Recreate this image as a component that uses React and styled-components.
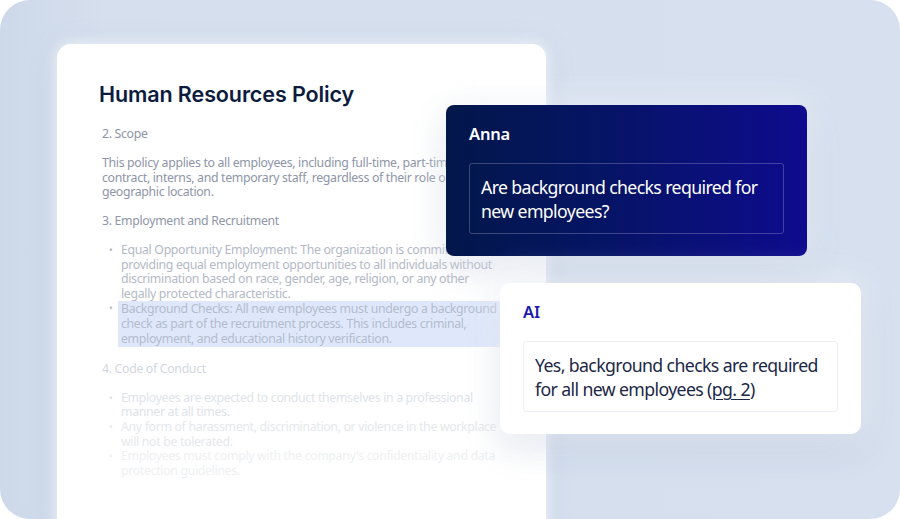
import React from "react";
import styled, { createGlobalStyle } from "styled-components";

const Global = createGlobalStyle`
  html, body { margin: 0; padding: 0; background: #ffffff; }
  body { width: 900px; height: 519px; overflow: hidden; }
  * { box-sizing: border-box; }
`;

const Frame = styled.div`
  position: relative;
  width: 900px;
  height: 519px;
  border-radius: 30px;
  overflow: hidden;
  background: linear-gradient(90deg, #cdd8e9 0%, #d5dfee 12%, #d6e0ef 100%);
  padding: 44px 0 0 57px;
`;

const Doc = styled.div`
  width: 489px;
  height: 520px;
  background: #ffffff;
  border-radius: 14px;
  box-shadow: 0 0 14px 2px rgba(240, 244, 250, 0.9), 0 4px 30px rgba(140, 160, 195, 0.18);
  padding: 36px 46px 0 42px;
  font-family: "Noto Sans", "Open Sans", sans-serif;
  font-size: 12.3px;
  line-height: 14.6px;
  letter-spacing: -0.32px;
`;

const Title = styled.h1`
  margin: 0 0 19px;
  font-family: Inter, "Noto Sans", sans-serif;
  font-weight: 600;
  font-size: 21.5px;
  line-height: 28px;
  color: #0d1b3e;
  letter-spacing: -0.1px;
`;

const Heading = styled.div`
  margin: 0 3px 14.5px 3px;
  color: ${(p) => p.$color};
`;

const Para = styled.p`
  margin: 0 3px 14px 3px;
  color: ${(p) => p.$color};
`;

const List = styled.ul`
  margin: 0 0 14.5px 0;
  padding: 0;
  list-style: none;
`;

const Item = styled.li`
  position: relative;
  padding: 0 0 0 22px;
  color: ${(p) => p.$color};
  &::before {
    content: "•";
    position: absolute;
    left: 10px;
    top: 0;
    font-size: 10px;
    color: inherit;
  }
`;

const HighlightText = styled.span`
  display: block;
  margin-left: -3px;
  margin-right: -10px;
  padding: 1px 10px 1px 3px;
  background: #dfe8fb;
  color: #b3bccd;
`;

const Card = styled.div`
  position: absolute;
  left: ${(p) => p.$left}px;
  top: ${(p) => p.$top}px;
  width: 361px;
  padding: 17px 23px 22px;
  border-radius: ${(p) => p.$radius}px;
  background: ${(p) => p.$bg};
  box-shadow: 0 0 30px 6px rgba(246, 247, 250, 0.55), 0 14px 34px rgba(110, 130, 170, 0.2);
  font-family: "Noto Sans", "Open Sans", sans-serif;
`;

const Name = styled.div`
  font-family: "Noto Sans", sans-serif;
  font-weight: 600;
  font-size: 16.5px;
  line-height: 24px;
  color: ${(p) => p.$color};
  margin-bottom: 17px;
  letter-spacing: -0.2px;
`;

const Bubble = styled.div`
  border: 1px solid ${(p) => p.$border};
  border-radius: 3px;
  padding: 11px 11px 10px;
  font-size: 17.7px;
  line-height: 24px;
  color: ${(p) => p.$color};
  letter-spacing: -0.62px;
`;

const Ref = styled.span`
  text-decoration: underline;
  text-underline-offset: 3px;
  text-decoration-thickness: 1px;
`;

export default function App() {
  return (
    <>
      <Global />
      <Frame>
        <Doc>
          <Title>Human Resources Policy</Title>
          <Heading $color="#8c94a6">2. Scope</Heading>
          <Para $color="#8d95a7">
            This policy applies to all employees, including full-time, part-time,
            contract, interns, and temporary staff, regardless of their role or
            geographic location.
          </Para>
          <Heading $color="#8f96a7">3. Employment and Recruitment</Heading>
          <List>
            <Item $color="#b3b9c6">
              Equal Opportunity Employment: The organization is committed to
              providing equal employment opportunities to all individuals without
              discrimination based on race, gender, age, religion, or any other
              legally protected characteristic.
            </Item>
            <Item $color="#b8bfcc">
              <HighlightText>
                Background Checks: All new employees must undergo a background
                check as part of the recruitment process. This includes criminal,
                employment, and educational history verification.
              </HighlightText>
            </Item>
          </List>
          <Heading $color="#d3d7de">4. Code of Conduct</Heading>
          <List>
            <Item $color="#e0e3e8">
              Employees are expected to conduct themselves in a professional
              manner at all times.
            </Item>
            <Item $color="#e6e8ec">
              Any form of harassment, discrimination, or violence in the workplace
              will not be tolerated.
            </Item>
            <Item $color="#eef0f2">
              Employees must comply with the company's confidentiality and data
              protection guidelines.
            </Item>
          </List>
        </Doc>

        <Card
          $left={446}
          $top={105}
          $radius={8}
          $bg="linear-gradient(90deg, #02174a 0%, #061466 45%, #0e0b8e 100%)"
        >
          <Name $color="#ffffff">Anna</Name>
          <Bubble $border="rgba(255,255,255,0.22)" $color="#ffffff">
            Are background checks required for new employees?
          </Bubble>
        </Card>

        <Card $left={500} $top={283} $radius={10} $bg="#ffffff">
          <Name $color="#1c1bae">AI</Name>
          <Bubble $border="#eceef3" $color="#1c2746">
            Yes, background checks are required for all new employees{" "}
            (<Ref>pg. 2</Ref>)
          </Bubble>
        </Card>
      </Frame>
    </>
  );
}
